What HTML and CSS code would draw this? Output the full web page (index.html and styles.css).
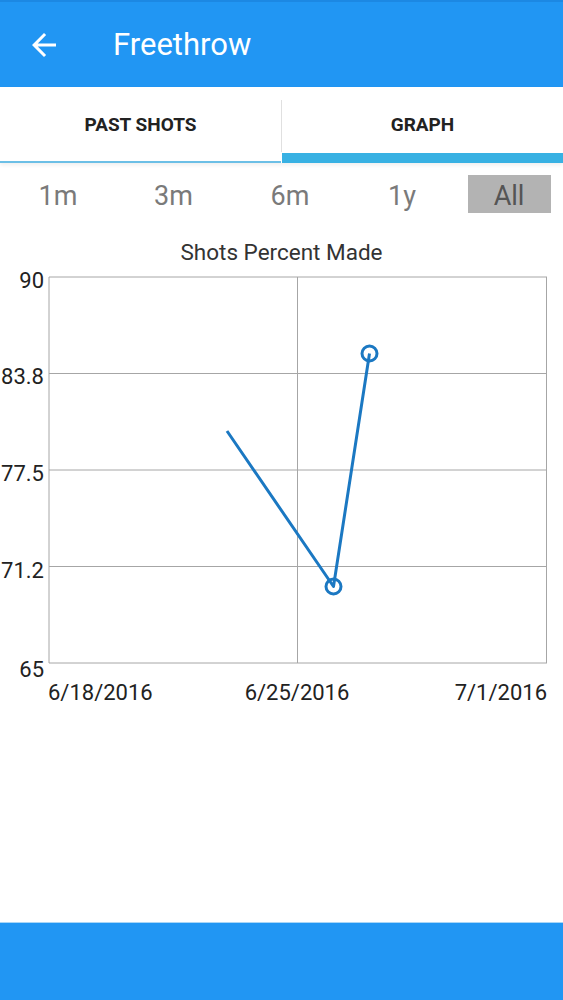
FILE: index.html
```html
<!DOCTYPE html>
<html lang="en">
<head>
    <meta charset="UTF-8">
    <title>Freethrow</title>
    <link rel="stylesheet" href="styles.css">
</head>
<body>
<div class="screen">
    <div class="app-bar">
        <button class="back-btn">
            <svg viewBox="0 0 24 24" width="36" height="36">
                <path d="M20 11H7.83l5.59-5.59L12 4l-8 8 8 8 1.41-1.41L7.83 13H20v-2z" fill="#fff"/>
            </svg>
        </button>
        <h1 class="app-title">Freethrow</h1>
    </div>

    <!-- tabs -->
    <div class="tabs">
        <div class="tab">
            <span class="tab-label">PAST SHOTS</span>
            <span class="tab-line"></span>
        </div>
        <span class="tab-divider"></span>
        <div class="tab active">
            <span class="tab-label">GRAPH</span>
            <span class="tab-line"></span>
        </div>
    </div>

    <!-- range buttons -->
    <div class="range-row">
        <button class="range-btn">1m</button>
        <button class="range-btn">3m</button>
        <button class="range-btn">6m</button>
        <button class="range-btn">1y</button>
        <button class="range-btn selected">All</button>
    </div>

    <!-- graph -->
    <svg class="chart" viewBox="0 230 563 480" width="563" height="480">
        <text class="chart-title" x="281.5" y="260" text-anchor="middle">Shots Percent Made</text>

        <g class="grid">
            <line x1="49" y1="277" x2="547" y2="277"/>
            <line x1="49" y1="373.5" x2="547" y2="373.5"/>
            <line x1="49" y1="470" x2="547" y2="470"/>
            <line x1="49" y1="566.5" x2="547" y2="566.5"/>
            <line x1="49" y1="663" x2="547" y2="663"/>
            <line x1="49" y1="277" x2="49" y2="663"/>
            <line x1="297.5" y1="277" x2="297.5" y2="663"/>
            <line x1="546.5" y1="277" x2="546.5" y2="663"/>
        </g>

        <g class="axis-label" text-anchor="end">
            <text x="44" y="288">90</text>
            <text x="44" y="384">83.8</text>
            <text x="44" y="481">77.5</text>
            <text x="44" y="578">71.2</text>
            <text x="44" y="677">65</text>
        </g>
        <g class="axis-label">
            <text x="48" y="700">6/18/2016</text>
            <text x="297" y="700" text-anchor="middle">6/25/2016</text>
            <text x="547" y="700" text-anchor="end">7/1/2016</text>
        </g>

        <polyline class="series" points="227,431 333.5,586.5 369.5,353.5"/>
        <circle class="point" cx="333.5" cy="586.5" r="7.5"/>
        <circle class="point" cx="369.5" cy="353.5" r="7.5"/>
    </svg>

    <div class="spacer"></div>
    <div class="bottom-bar"></div>
</div>
</body>
</html>
```

FILE: styles.css
```css
/* ========== base ========== */
:root {
    --primary: #2196F3;
    --primary-dark: #1c88e3;
    --tab-accent: #38b1e3;
    --tab-line: #6cbfe6;
    --grid: #a6a6a6;
    --text-dark: #222;
}

body {
    margin: 0;
    padding: 0;
    background: #fff;
    font-family: Roboto, "Noto Sans", "Liberation Sans", sans-serif;
}

.screen {
    display: flex;
    flex-direction: column;
    width: 563px;
    height: 1000px;
    overflow: hidden;
}

/* ========== app bar ========== */
.app-bar {
    display: flex;
    align-items: center;
    height: 87px;
    box-sizing: border-box;
    border-top: 2px solid var(--primary-dark);
    background: var(--primary);
    padding-left: 26px;
}
.back-btn {
    display: flex;
    padding: 0;
    margin: 0;
    background: transparent;
    border: none;
}
.app-title {
    margin: 0 0 0 51px;
    font-size: 31px;
    font-weight: 400;
    color: #fff;
    line-height: 1;
}

/* ========== tabs ========== */
.tabs {
    display: flex;
    height: 76px;
    background: #fff;
    box-shadow: 0 2px 4px rgba(0, 0, 0, 0.07);
}
.tab {
    flex: 1;
    display: flex;
    flex-direction: column;
    align-items: center;
}
.tab-label {
    padding-top: 29px;
    font-size: 19px;
    line-height: 18px;
    font-weight: 700;
    color: var(--text-dark);
}
.tab-line {
    align-self: stretch;
    margin-top: auto;
    height: 2px;
    background: var(--tab-line);
}
.tab.active .tab-line {
    height: 10px;
    background: var(--tab-accent);
}
.tab-divider {
    width: 1px;
    margin: 13px 0 11px;
    background: #e0e0e0;
}

/* ========== range buttons ========== */
.range-row {
    display: grid;
    grid-template-columns: 116px 115px 118px 106px 1fr;
    justify-items: center;
    margin-top: 12px;
    height: 38px;
}
.range-btn {
    width: 83px;
    height: 38px;
    padding: 4px 0 0;
    border: none;
    background: transparent;
    font-family: inherit;
    font-size: 27px;
    font-weight: 400;
    color: #7a7a7a;
}
.range-btn.selected {
    background: #b3b3b3;
    color: #555;
}

/* ========== chart ========== */
.chart {
    display: block;
    margin-top: 17px;
}
.chart-title {
    font-size: 22.5px;
    fill: #333;
}
.grid line {
    stroke: var(--grid);
    stroke-width: 1;
}
.axis-label text {
    font-size: 22px;
    fill: var(--text-dark);
}
.series {
    fill: none;
    stroke: #1b78c2;
    stroke-width: 3;
    stroke-linejoin: round;
}
.point {
    fill: none;
    stroke: #1b78c2;
    stroke-width: 3;
}

/* ========== bottom bar ========== */
.spacer {
    flex: 1;
}
.bottom-bar {
    height: 78px;
    box-sizing: border-box;
    border-top: 1px solid #a8d6f7;
    background: var(--primary);
}
```
